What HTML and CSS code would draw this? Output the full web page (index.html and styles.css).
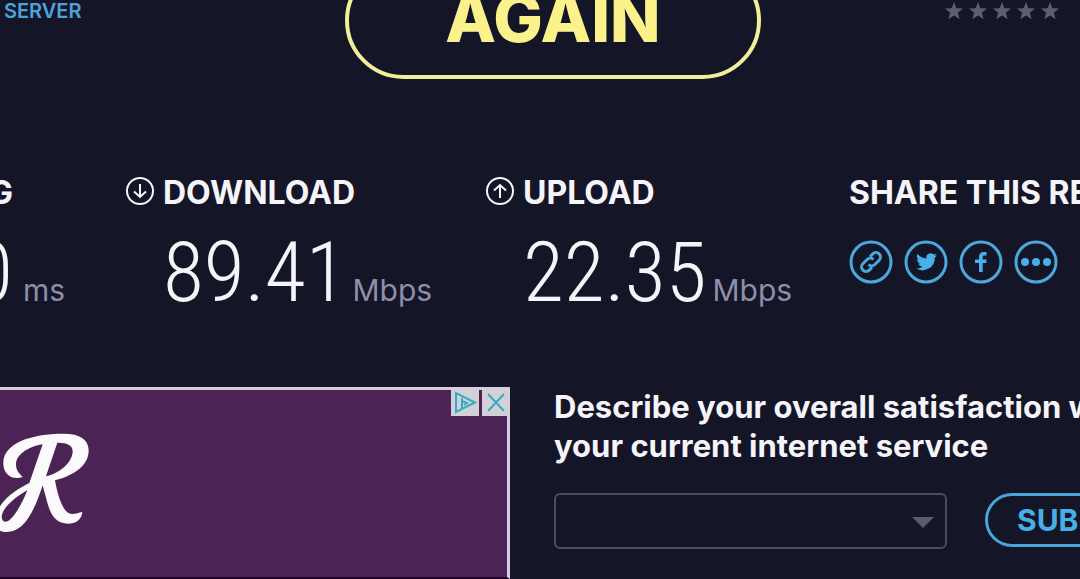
FILE: index.html
```html
<!DOCTYPE html>
<html lang="en">
<head>
  <meta charset="UTF-8" />
  <title>Speed Test Results</title>
  <meta name="viewport" content="width=device-width, initial-scale=1" />
  <link rel="stylesheet" href="styles.css">
</head>
<body>
  <svg class="sprite" aria-hidden="true">
    <symbol id="star" viewBox="0 0 18 18">
      <path d="M9 0l2.4 6.2 6.6.3-5.1 4.2 1.8 6.5L9 13.500l-5.700 3.700 1.800-6.500L0 6.500l6.600-.3z" />
    </symbol>
  </svg>

  <header class="top">
    <a class="server-link" href="#">SERVER</a>
    <button class="again" type="button">AGAIN</button>
    <div class="stars" role="img" aria-label="Rating">
      <svg><use href="#star" /></svg>
      <svg><use href="#star" /></svg>
      <svg><use href="#star" /></svg>
      <svg><use href="#star" /></svg>
      <svg><use href="#star" /></svg>
    </div>
  </header>

  <main>
    <section class="results">
      <div class="metric ping">
        <h2>PING</h2>
        <p class="value"><span class="number">0</span><span class="unit">ms</span></p>
      </div>

      <div class="metric">
        <svg class="arrow" viewBox="0 0 30 30">
          <circle cx="15" cy="15" r="13" />
          <path d="M15 8v13M9 15.500l6 5.500 6-5.500" />
        </svg>
        <h2>DOWNLOAD</h2>
        <p class="value"><span class="number">89.41</span><span class="unit">Mbps</span></p>
      </div>

      <div class="metric">
        <svg class="arrow" viewBox="0 0 30 30">
          <circle cx="15" cy="15" r="13" />
          <path d="M15 22V9M9 14.500L15 9l6 5.500" />
        </svg>
        <h2>UPLOAD</h2>
        <p class="value"><span class="number">22.35</span><span class="unit">Mbps</span></p>
      </div>

      <div class="share">
        <h2>SHARE THIS RESULT</h2>
        <div class="share-links">
          <a href="#" aria-label="Copy link">
            <svg viewBox="0 0 44 44">
              <circle cx="22" cy="22" r="20" />
              <g class="chain" transform="rotate(-45 22 22)">
                <path d="M19 26.500h-4a4.500 4.500 0 0 1 0-9h6a4.500 4.500 0 0 1 4.500 4.500" />
                <path d="M25 17.500h4a4.500 4.500 0 0 1 0 9h-6a4.500 4.500 0 0 1-4.500-4.500" />
              </g>
            </svg>
          </a>
          <a href="#" aria-label="Twitter">
            <svg viewBox="0 0 44 44">
              <circle cx="22" cy="22" r="20" />
              <path class="solid" d="M33 15.200a8 8 0 0 1-2.400.7 4.200 4.200 0 0 0 1.800-2.400 8 8 0 0 1-2.700 1.100 4.300 4.300 0 0 0-7.300 3.900 12 12 0 0 1-8.800-4.500 4.300 4.300 0 0 0 1.300 5.700 4 4 0 0 1-1.900-.5c0 2 1.400 3.800 3.400 4.300a4 4 0 0 1-1.900 0 4.300 4.300 0 0 0 4 3A8.600 8.600 0 0 1 12 28.300a12.200 12.200 0 0 0 18.800-10.900 8 8 0 0 0 2.200-2.200z" />
            </svg>
          </a>
          <a href="#" aria-label="Facebook">
            <svg viewBox="0 0 44 44">
              <circle cx="22" cy="22" r="20" />
              <path class="solid" d="M20 32v-9h-4v-3.500h4V17c0-3.200 1.800-5 4.600-5H27.500v3.500h-2c-1.300 0-1.800.6-1.800 1.800v2.200h4l-.4 3.500h-3.600v9z" />
            </svg>
          </a>
          <a href="#" aria-label="More">
            <svg viewBox="0 0 44 44">
              <circle cx="22" cy="22" r="20" />
              <g class="solid">
                <circle cx="11" cy="22" r="4" />
                <circle cx="22" cy="22" r="4" />
                <circle cx="33" cy="22" r="4" />
              </g>
            </svg>
          </a>
        </div>
      </div>
    </section>

    <section class="bottom">
      <div class="ad">
        <svg class="ad-logo" viewBox="0 155 270 303">
          <path d="M68 290C40 300 8 285 10 245 12 190 90 160 190 160 240 160 266 178 266 210 266 255 225 285 165 300 172 340 185 385 205 398 218 405 232 398 247 395 245 420 225 430 205 430 165 430 150 400 140 360 135 340 130 325 128 315 105 385 75 455 20 455 10 455 0 452-5 448V385C20 345 55 325 88 308L128 192C80 200 48 225 48 252 48 270 56 278 68 290zM172 187L138 288C190 275 218 240 218 212 218 195 200 186 172 187zM82 330C45 350 5 385 5 410 5 425 18 428 28 420 50 400 68 365 82 330z" />
        </svg>
        <div class="ad-controls">
          <button type="button" aria-label="About this ad">
            <svg viewBox="0 0 26 26"><path d="M4 4v19l19-9.500zM10 9v10M10 12l5 2-3 2" /></svg>
          </button>
          <button type="button" aria-label="Close ad">
            <svg viewBox="0 0 26 26"><path d="M5 5l16 17M21 5L5 22" /></svg>
          </button>
        </div>
      </div>

      <form class="survey">
        <label for="satisfaction">Describe your overall satisfaction with<br>your current internet service</label>
        <div class="survey-row">
          <div class="select-wrap">
            <select id="satisfaction" name="satisfaction">
              <option value=""></option>
            </select>
          </div>
          <button class="submit" type="button">SUBMIT</button>
        </div>
      </form>
    </section>
  </main>
</body>
</html>
```

FILE: styles.css
```css
* {
  box-sizing: border-box;
}

body {
  margin: 0;
  background-color: #141526;
  color: #f4f4fa;
  font-family: Inter, "Liberation Sans", sans-serif;
  overflow: hidden;
}

h2, p {
  margin: 0;
}

button {
  font-family: inherit;
  cursor: pointer;
}

.sprite {
  display: none;
}

.top {
  display: grid;
  grid-template-columns: 345px auto 1fr;
  align-items: center;
  margin-top: -38px;
}

.server-link {
  padding-left: 4px;
  margin-top: -20px;
  color: #4ba3dc;
  font-size: 20px;
  font-weight: 600;
  line-height: 20px;
  text-decoration: none;
}

.again {
  width: 416px;
  height: 117px;
  padding: 0 0 6px;
  border: 4px solid #f2ee9a;
  border-radius: 60px;
  background: none;
  color: #fbf28c;
  font-size: 66px;
  font-weight: 800;
}

.stars {
  display: flex;
  justify-content: flex-end;
  gap: 6px;
  margin-top: -20px;
  padding-right: 21px;
}

.stars svg {
  width: 18px;
  height: 18px;
  fill: #5c5d70;
}

.results {
  display: grid;
  grid-template-columns: 125px 1fr 1fr 235px;
  margin-top: 94px;
}

h2 {
  font-size: 32px;
  font-weight: 700;
  line-height: 40px;
  white-space: nowrap;
}

.metric {
  display: grid;
  grid-template-columns: 30px 1fr;
  column-gap: 8px;
  align-content: start;
}

.arrow {
  width: 30px;
  height: 30px;
  margin-top: 3px;
  fill: none;
  stroke: #f4f4fa;
  stroke-width: 2;
}

.value {
  display: flex;
  grid-column: 2;
  align-items: baseline;
  gap: 6px;
  height: 100px;
}

.number {
  font-family: "Roboto Condensed", "Liberation Sans Narrow", Roboto, sans-serif;
  font-size: 84px;
  font-weight: 300;
  line-height: 120px;
}

.unit {
  color: #8d8ea9;
  font-size: 30px;
}

.ping {
  display: flex;
  flex-direction: column;
  align-items: flex-end;
  padding-right: 60px;
}

.ping .value {
  gap: 10px;
}

.ping h2 {
  padding-right: 52px;
}

.share {
  padding-left: 4px;
}

.share-links {
  display: flex;
  gap: 11px;
  margin-top: 27px;
}

.share-links a,
.share-links svg {
  display: block;
  width: 44px;
  height: 44px;
}

.share-links svg {
  fill: none;
  stroke: #4ba8dc;
  stroke-width: 3;
}

.share-links .solid {
  fill: #45b0ea;
  stroke: none;
}

.bottom {
  display: grid;
  grid-template-columns: 510px 1fr;
  gap: 44px;
  align-items: start;
  margin-top: 74px;
}

.ad {
  display: flex;
  justify-content: space-between;
  align-items: flex-start;
  height: 192px;
  border-top: 3px solid #d6cbdf;
  border-right: 3px solid #d6cbdf;
  border-bottom: 2px solid #23002b;
  background-color: #4b2354;
}

.ad-logo {
  width: 90px;
  height: 101px;
  margin-top: 42px;
  fill: #fcfafc;
  fill-rule: evenodd;
}

.ad-controls {
  display: flex;
  gap: 3px;
  margin: -2px -3px 0 0;
}

.ad-controls button {
  width: 28px;
  height: 28px;
  padding: 1px;
  border: 0;
  background-color: #d3d1d8;
}

.ad-controls svg {
  display: block;
  width: 26px;
  height: 26px;
  fill: none;
  stroke: #35abc2;
  stroke-width: 2;
}

.survey {
  min-width: 0;
}

.survey label {
  display: block;
  font-size: 31px;
  font-weight: 700;
  line-height: 39px;
  white-space: nowrap;
}

.survey-row {
  display: flex;
  gap: 38px;
  margin-top: 28px;
}

.select-wrap {
  position: relative;
  flex: none;
  width: 393px;
}

.select-wrap::after {
  content: "";
  position: absolute;
  top: 24px;
  right: 13px;
  border: 11px solid transparent;
  border-top-color: #5a5b6c;
  border-bottom: 0;
  pointer-events: none;
}

select {
  width: 100%;
  height: 56px;
  padding: 0 16px;
  border: 2px solid #4b4c5d;
  border-radius: 6px;
  background: none;
  color: inherit;
  font-size: 24px;
  appearance: none;
}

.submit {
  flex: none;
  height: 54px;
  padding: 0 29px;
  border: 3px solid #48a6da;
  border-radius: 27px;
  background: none;
  color: #48aee8;
  font-size: 30px;
  font-weight: 700;
}
```
